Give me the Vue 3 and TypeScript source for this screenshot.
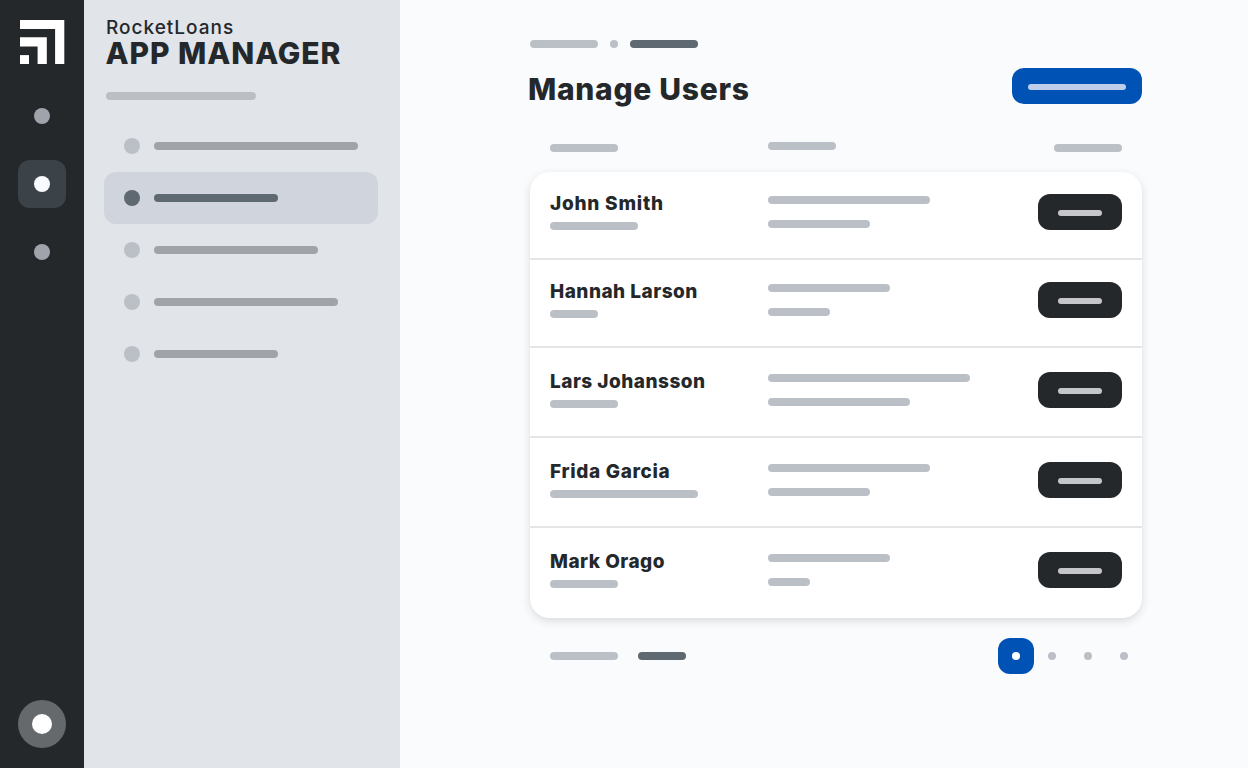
<script setup lang="ts">
interface User {
  name: string
  fit: string
  tall: boolean
  meta: number
  lines: [number, number]
}

interface NavItem {
  width: number
  active: boolean
}

const navItems: NavItem[] = [
  { width: 204, active: false },
  { width: 124, active: true },
  { width: 164, active: false },
  { width: 184, active: false },
  { width: 124, active: false },
]

const users: User[] = [
  { name: 'John Smith', fit: 'loosest', tall: false, meta: 88, lines: [162, 102] },
  { name: 'Hannah Larson', fit: 'normal', tall: false, meta: 48, lines: [122, 62] },
  { name: 'Lars Johansson', fit: 'normal', tall: true, meta: 68, lines: [202, 142] },
  { name: 'Frida Garcia', fit: 'loose', tall: true, meta: 148, lines: [162, 102] },
  { name: 'Mark Orago', fit: 'normal', tall: true, meta: 68, lines: [122, 42] },
]

const px = (n: number): { width: string } => ({ width: `${n}px` })
</script>

<template>
  <div class="app">
    <aside class="rail">
      <svg class="logo" viewBox="0 0 44 44">
        <path d="M0 0H44.3V44H35.1V9H0Z" />
        <path d="M0 17.3H26.8V44H17.6V26.4H0Z" />
        <path d="M0 35.1H9V44H0Z" />
      </svg>
      <nav class="rail-nav">
        <button class="rail-item"><i class="dot"></i></button>
        <button class="rail-item on"><i class="dot"></i></button>
        <button class="rail-item"><i class="dot"></i></button>
      </nav>
      <div class="avatar"><i></i></div>
    </aside>

    <aside class="sidebar">
      <div class="brand">RocketLoans</div>
      <div class="product">APP MANAGER</div>
      <div class="bar section"></div>
      <ul class="nav">
        <li v-for="(item, i) in navItems" :key="i" :class="{ on: item.active }">
          <i class="dot"></i>
          <span class="bar" :style="px(item.width)"></span>
        </li>
      </ul>
    </aside>

    <main class="main">
      <div class="crumbs">
        <span class="bar w68"></span>
        <span class="bar w8"></span>
        <span class="bar w68 dark"></span>
      </div>
      <header class="heading">
        <h1>Manage Users</h1>
        <button class="primary"><span></span></button>
      </header>
      <div class="columns">
        <span class="bar w68"></span>
        <span class="bar w68 raised"></span>
        <span class="bar w68"></span>
      </div>
      <section class="card">
        <article v-for="user in users" :key="user.name" class="row" :class="{ tall: user.tall }">
          <div class="who">
            <div class="name" :class="user.fit">{{ user.name }}</div>
            <div class="bar" :style="px(user.meta)"></div>
          </div>
          <div class="details">
            <div v-for="(line, i) in user.lines" :key="i" class="bar" :style="px(line)"></div>
          </div>
          <button class="action"><span></span></button>
        </article>
      </section>
      <footer class="footer">
        <span class="bar w68"></span>
        <span class="bar w48 dark"></span>
        <div class="pager">
          <button class="page on"><i></i></button>
          <button class="page"><i></i></button>
          <button class="page"><i></i></button>
          <button class="page"><i></i></button>
        </div>
      </footer>
    </main>
  </div>
</template>

<style>
body {
  margin: 0;
}
</style>

<style scoped>
.app {
  display: flex;
  width: 1248px;
  height: 768px;
  overflow: hidden;
  background: #fafbfd;
  color: #24282b;
  font-family: Inter, "Liberation Sans", sans-serif;
}
.app * {
  box-sizing: border-box;
}
button {
  border: 0;
  padding: 0;
  display: flex;
  align-items: center;
  justify-content: center;
}
.bar {
  display: block;
  height: 8px;
  border-radius: 4px;
  background: #bbc0c7;
}
.bar.dark {
  background: #5f6971;
}
.w8 { width: 8px; }
.w48 { width: 48px; }
.w68 { width: 68px; }
.dot {
  width: 16px;
  height: 16px;
  border-radius: 50%;
  flex: none;
}

.rail {
  width: 84px;
  flex: none;
  background: #24282b;
  display: flex;
  flex-direction: column;
  align-items: center;
  padding: 20px 0;
}
.logo {
  width: 44px;
  height: 44px;
  fill: #fff;
  overflow: visible;
}
.rail-nav {
  display: flex;
  flex-direction: column;
  gap: 20px;
  margin-top: 28px;
}
.rail-item {
  width: 48px;
  height: 48px;
  border-radius: 12px;
  background: transparent;
}
.rail-item .dot {
  background: #a0a3ab;
}
.rail-item.on {
  background: #3c4348;
}
.rail-item.on .dot {
  background: #fafbfe;
}
.avatar {
  width: 48px;
  height: 48px;
  margin-top: auto;
  border-radius: 50%;
  background: #66696b;
  display: grid;
  place-items: center;
}
.avatar i {
  width: 20px;
  height: 20px;
  border-radius: 50%;
  background: #fff;
}

.sidebar {
  width: 316px;
  flex: none;
  background: #e1e4e8;
  padding: 16px 22px 0 20px;
}
.brand {
  height: 22px;
  margin-left: 2px;
  font-size: 19px;
  line-height: 23px;
  font-weight: 450;
  letter-spacing: 1px;
  white-space: nowrap;
}
.product {
  height: 30px;
  margin-left: 1.5px;
  font-size: 30px;
  line-height: 30px;
  font-weight: 800;
  letter-spacing: 0.93px;
  white-space: nowrap;
}
.section {
  width: 150px;
  margin: 24px 0 0 2px;
  background: #bbbfc4;
}
.nav {
  list-style: none;
  margin: 20px 0 0;
  padding: 0;
}
.nav li {
  display: flex;
  align-items: center;
  gap: 14px;
  height: 52px;
  padding-left: 20px;
  border-radius: 12px;
}
.nav .dot {
  background: #bbc0c7;
}
.nav .bar {
  background: #a0a4a8;
}
.nav .on {
  background: #d0d4dc;
}
.nav .on .dot,
.nav .on .bar {
  background: #5f6971;
}

.main {
  width: 612px;
  margin-left: 130px;
  padding-top: 40px;
}
.crumbs {
  display: flex;
  gap: 12px;
}
.heading {
  display: flex;
  justify-content: space-between;
  height: 36px;
  margin-top: 20px;
}
h1 {
  margin: 3px 0 0 -2px;
  font-size: 30px;
  line-height: 37px;
  font-weight: 800;
  letter-spacing: 0.7px;
  white-space: nowrap;
}
.primary {
  width: 130px;
  height: 36px;
  border-radius: 12px;
  background: #0052b4;
}
.primary span {
  width: 98px;
  height: 6px;
  margin-top: 1px;
  border-radius: 3px;
  background: #bfcfeb;
}
.columns,
.row {
  display: grid;
  grid-template-columns: 218px 1fr auto;
  padding: 0 20px;
}
.columns {
  height: 68px;
  padding-top: 40px;
}
.raised {
  margin-top: -2px;
}
.card {
  border-radius: 20px;
  background: #fff;
  box-shadow: 0 3px 8px rgba(36, 40, 43, 0.15);
}
.row {
  height: 88px;
  padding-top: 22px;
  border-bottom: 2px solid #e4e5e7;
}
.row.tall {
  height: 90px;
  padding-top: 24px;
}
.row:last-child {
  border-bottom: 0;
}
.name {
  height: 28px;
  font-size: 19px;
  line-height: 20px;
  font-weight: 800;
  white-space: nowrap;
}
.normal { letter-spacing: 0.48px; }
.loose { letter-spacing: 0.66px; }
.loosest { letter-spacing: 0.77px; }
.details {
  display: flex;
  flex-direction: column;
  gap: 16px;
  padding-top: 2px;
}
.action {
  width: 84px;
  height: 36px;
  border-radius: 12px;
  background: #24282b;
}
.action span {
  width: 44px;
  height: 6px;
  margin-top: 1px;
  border-radius: 3px;
  background: #c5c6ca;
}
.footer {
  display: flex;
  align-items: center;
  gap: 20px;
  height: 36px;
  margin-top: 20px;
  padding-left: 20px;
}
.pager {
  display: flex;
  margin-left: auto;
}
.page {
  width: 36px;
  height: 36px;
  border-radius: 12px;
  background: transparent;
}
.page i {
  width: 8px;
  height: 8px;
  border-radius: 50%;
  background: #bbc0c6;
}
.page.on {
  background: #0052b4;
}
.page.on i {
  background: #fff;
}
</style>
